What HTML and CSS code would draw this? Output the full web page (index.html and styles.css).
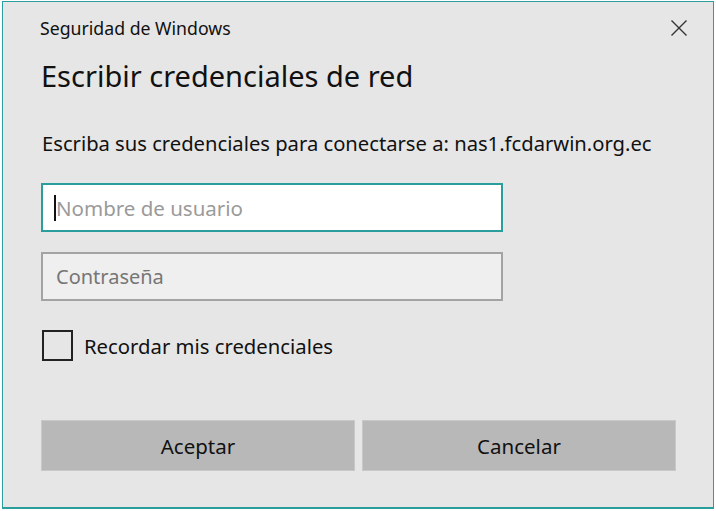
FILE: index.html
```html
<!DOCTYPE html>
<html lang="es">
<head>
<meta charset="utf-8">
<title>Seguridad de Windows</title>
<link rel="stylesheet" href="styles.css">
</head>
<body>
<div class="dialog">
  <div class="titlebar">
    <span class="app-title">Seguridad de Windows</span>
    <svg class="close" width="16" height="16" viewBox="0 0 16 16"><path d="M0.5 0.5 L15.5 15.5 M15.5 0.5 L0.5 15.5" stroke="#333" stroke-width="1.4" fill="none"/></svg>
  </div>
  <h1 class="heading">Escribir credenciales de red</h1>
  <p class="desc">Escriba sus credenciales para conectarse a: nas1.fcdarwin.org.ec</p>
  <div class="field field-focus"><span class="caret"></span><span class="ph">Nombre de usuario</span></div>
  <div class="field field-pass"><span class="ph ph-dark">Contraseña</span></div>
  <label class="check-row"><span class="checkbox"></span><span class="check-label">Recordar mis credenciales</span></label>
  <div class="buttons">
    <div class="btn">Aceptar</div>
    <div class="btn">Cancelar</div>
  </div>
</div>
</body>
</html>
```
FILE: styles.css
```css
html, body {
  margin: 0;
  padding: 0;
  background: #ffffff;
}
body {
  font-family: "Noto Sans", "Open Sans", sans-serif;
  color: #000;
}
.dialog {
  box-sizing: border-box;
  width: 712px;
  height: 508px;
  margin: 1px 0 0 2px;
  border: 1px solid #2a9d9d;
  border-bottom-width: 2px;
  background: #e6e6e6;
  padding: 0 37px 0 38px;
  display: flex;
  flex-direction: column;
}
.titlebar {
  display: flex;
  justify-content: space-between;
  align-items: center;
  height: 52px;
  margin-right: -11px;
  margin-left: -1px;
}
.app-title {
  font-size: 17.7px;
  line-height: 24px;
  color: #111;
}
.close {
  display: block;
  margin-top: 0;
}
.heading {
  margin: 0;
  font-weight: normal;
  font-size: 29px;
  line-height: 44px;
  color: #111;
}
.desc {
  margin: 33px 0 0 1px;
  font-size: 20.2px;
  line-height: 24px;
  color: #111;
  white-space: nowrap;
}
.field {
  box-sizing: border-box;
  width: 462px;
  height: 49px;
  display: flex;
  align-items: center;
  padding-left: 13px;
  border: 2px solid #2a9d9d;
  background: #fff;
  font-size: 20.5px;
  line-height: 26px;
}
.field-focus {
  margin-top: 28px;
  padding-left: 11px;
}
.field-pass {
  margin-top: 20px;
  border-color: #a3a3a3;
  background: #efefef;
  font-size: 20px;
}
.caret {
  width: 2px;
  height: 26px;
  background: #111;
}
.ph {
  color: #9a9a9a;
}
.ph-dark {
  color: #767676;
}
.check-row {
  display: flex;
  align-items: center;
  margin-top: 29px;
  margin-left: 1px;
  height: 31px;
}
.checkbox {
  box-sizing: border-box;
  width: 31px;
  height: 31px;
  border: 2px solid #222;
}
.check-label {
  margin-left: 11px;
  font-size: 20.3px;
  line-height: 26px;
  color: #111;
}
.buttons {
  display: flex;
  gap: 7px;
  margin-top: 59px;
}
.btn {
  box-sizing: border-box;
  width: 315px;
  height: 51px;
  background: #b8b8b8;
  border: 1px solid #c8c8c8;
  display: flex;
  align-items: center;
  justify-content: center;
  font-size: 20.5px;
  color: #111;
}
```
